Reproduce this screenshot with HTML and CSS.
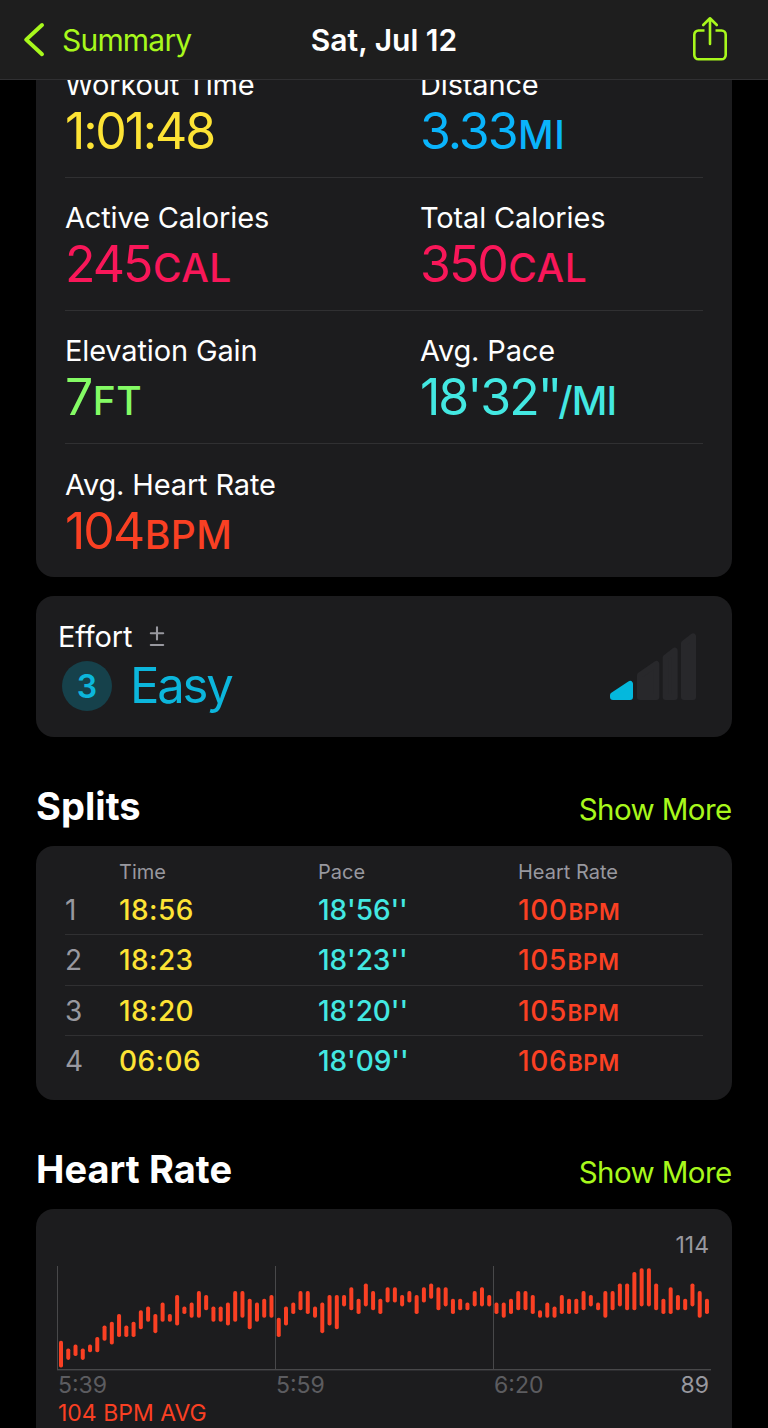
FILE: index.html
```html
<!DOCTYPE html>
<html lang="en">
<head>
    <meta charset="UTF-8">
    <meta name="viewport" content="width=device-width, initial-scale=1.0">
    <title>Workout Summary</title>
    <link rel="stylesheet" href="styles.css">
</head>
<body>
    <header class="navbar">
        <a class="back">
            <svg class="chevron" width="24" height="36" viewBox="0 0 24 36" fill="none" stroke="currentColor" stroke-width="4" stroke-linecap="round" stroke-linejoin="round">
                <path d="M20 3 4.2 17.6 20 32.2"/>
            </svg>
            <span>Summary</span>
        </a>
        <h1 class="title">Sat, Jul 12</h1>
        <svg class="share" width="36" height="46" viewBox="0 0 36 46" fill="none" stroke="currentColor" stroke-width="2.6" stroke-linecap="round" stroke-linejoin="round">
            <path d="M12.5 14.5H6.5a4.2 4.2 0 0 0-4.2 4.2v20.4a4.2 4.2 0 0 0 4.2 4.2h23a4.2 4.2 0 0 0 4.2-4.2V18.7a4.2 4.2 0 0 0-4.2-4.2h-6" stroke-linecap="butt"/>
            <path d="M18 28V2.6M11.2 9 18 2.3 24.8 9"/>
        </svg>
    </header>

    <main class="content">
        <section class="card stats">
            <div class="stat-row">
                <div class="stat"><div class="label">Workout Time</div><div class="value time clock">1:01:48</div></div>
                <div class="stat"><div class="label">Distance</div><div class="value distance">3.33<span class="unit">MI</span></div></div>
            </div>
            <div class="stat-row">
                <div class="stat"><div class="label">Active Calories</div><div class="value calories">245<span class="unit">CAL</span></div></div>
                <div class="stat"><div class="label">Total Calories</div><div class="value calories">350<span class="unit">CAL</span></div></div>
            </div>
            <div class="stat-row">
                <div class="stat"><div class="label">Elevation Gain</div><div class="value elevation">7<span class="unit">FT</span></div></div>
                <div class="stat"><div class="label">Avg. Pace</div><div class="value pace">18'32<span class="seconds">''</span><span class="unit">/MI</span></div></div>
            </div>
            <div class="stat-row">
                <div class="stat"><div class="label">Avg. Heart Rate</div><div class="value heart">104<span class="unit">BPM</span></div></div>
            </div>
        </section>

        <section class="card effort">
            <div>
                <div class="label effort-label">
                    <span>Effort</span>
                    <svg width="16" height="22" viewBox="0 0 16 22" fill="none" stroke="currentColor" stroke-width="2.1" stroke-linecap="round">
                        <path d="M1.8 7.3h12.4M8 1.2v12.2M1.8 19h12.4"/>
                    </svg>
                </div>
                <div class="effort-value">
                    <span class="badge">3</span>
                    <span class="value easy">Easy</span>
                </div>
            </div>
            <svg class="levels" width="86" height="67" viewBox="0 0 258 201" stroke-width="18" stroke-linejoin="round">
                <path class="level on" d="M9 192V187L60 153V192Z"/>
                <path class="level" d="M90 192V127L139 93V192Z"/>
                <path class="level" d="M167 192V74L194 53V192Z"/>
                <path class="level" d="M222 192V31L249 10V192Z"/>
            </svg>
        </section>

        <div class="section-head">
            <h2>Splits</h2>
            <a>Show More</a>
        </div>
        <section class="card splits">
            <div class="split split-head"><span></span><span>Time</span><span>Pace</span><span>Heart Rate</span></div>
            <div class="split"><span class="num">1</span><span class="time">18:56</span><span class="pace">18'56''</span><span class="heart">100<span class="unit">BPM</span></span></div>
            <div class="split"><span class="num">2</span><span class="time">18:23</span><span class="pace">18'23''</span><span class="heart">105<span class="unit">BPM</span></span></div>
            <div class="split"><span class="num">3</span><span class="time">18:20</span><span class="pace">18'20''</span><span class="heart">105<span class="unit">BPM</span></span></div>
            <div class="split"><span class="num">4</span><span class="time">06:06</span><span class="pace">18'09''</span><span class="heart">106<span class="unit">BPM</span></span></div>
        </section>

        <div class="section-head">
            <h2>Heart Rate</h2>
            <a>Show More</a>
        </div>
        <section class="card heart-card">
            <div class="chart-max">114</div>
            <svg class="chart" id="heartChart" width="654" height="105" viewBox="0 0 654 105"></svg>
            <div class="axis"><span>5:39</span><span>5:59</span><span>6:20</span><span class="chart-min">89</span></div>
            <div class="average heart">104 BPM AVG</div>
        </section>
    </main>
    <script>
        // [high, low] bpm for each interval
        const samples = [
            [95,89],[93,91],[94,92],[93,91],[94,93],[96,93],[99,96],[100,95],[102,97],[99,97],
            [100,97],[103,99],[104,101],[102,98],[105,101],[102,101],[107,100],[104,103],[105,102],[108,102],
            [107,104],[104,101],[104,101],[105,100],[108,101],[108,102],[106,99],[105,101],[106,102],[107,102],
            [101,97],[104,100],[105,103],[108,104],[108,103],[104,102],[105,98],[107,100],[107,99],[107,105],
            [109,104],[106,103],[110,105],[108,104],[106,103],[109,106],[109,106],[107,105],[108,106],[107,103],
            [109,106],[110,107],[109,104],[109,105],[106,103],[106,104],[105,104],[108,105],[109,105],[107,105],
            [105,103],[105,102],[106,103],[108,104],[108,104],[107,103],[103,102],[105,102],[104,102],[107,103],
            [106,103],[106,103],[108,104],[107,105],[105,104],[108,102],[108,104],[110,105],[110,104],[113,104],
            [114,105],[114,105],[110,104],[106,103],[109,103],[107,104],[106,104],[110,105],[108,102],[106,103]
        ];
        const maxBpm = 114;
        const unit = 3.82;  // pixels per bpm
        const step = 7.258;

        function add(name, attrs) {
            const el = document.createElementNS("http://www.w3.org/2000/svg", name);
            for (const key in attrs) {
                el.setAttribute(key, attrs[key]);
            }
            document.getElementById("heartChart").appendChild(el);
        }

        function drawChart() {
            for (const x of [0, 218, 436]) {
                add("rect", { class: "grid", x: x, y: 0, width: 1, height: 104 });
            }
            add("rect", { class: "grid", x: 0, y: 103, width: 654, height: 1.4 });

            samples.forEach(([high, low], i) => {
                add("rect", {
                    class: "beat",
                    x: 2 + i * step,
                    y: 2.2 + (maxBpm - high) * unit,
                    width: 4,
                    height: (high - low + 1) * unit,
                    rx: 1.8
                });
            });
        }

        drawChart();
    </script>
</body>
</html>
```
FILE: styles.css
```css
body, html {
    height: 100%;
    margin: 0;
    background: #000;
    overflow: hidden;
}

body {
    color: #fff;
    font-family: Inter, "Liberation Sans", sans-serif;
    font-size: 29px;
}

h1, h2 {
    margin: 0;
}

.navbar {
    position: relative;
    z-index: 1;
    box-sizing: border-box;
    display: grid;
    grid-template-columns: 1fr auto 1fr;
    align-items: center;
    height: 80px;
    padding: 0 40px;
    background: #1e1e1e;
    border-bottom: 1px solid #303032;
    color: #a8f81c;
}

.back {
    display: flex;
    align-items: center;
    gap: 16px;
    margin-left: -18px;
    font-size: 30px;
    letter-spacing: -0.8px;
}

.title {
    color: #fff;
    font-size: 30px;
    font-weight: 600;
    letter-spacing: 0;
}

.share {
    justify-self: end;
    margin-bottom: 1px;
}

.content {
    padding: 0 36px;
}

.card {
    box-sizing: border-box;
    background: #1c1c1e;
    border-radius: 18px;
}

.stats {
    margin-top: -56px;
    padding: 20.5px 29px 0;
    height: 553.4px;
}

.stat-row {
    box-sizing: border-box;
    display: grid;
    grid-template-columns: 355px 1fr;
    height: 133.33px;
    padding-top: 22.2px;
    border-bottom: 1px solid #303032;
}

.stat-row:last-child {
    border-bottom: none;
}

.label {
    line-height: 36px;
    letter-spacing: -0.15px;
}

.value {
    font-size: 50px;
    line-height: 56px;
    letter-spacing: -2px;
}

.clock {
    letter-spacing: -2.2px;
}

.unit {
    margin-left: 1.5px;
    font-size: 39px;
    font-weight: 500;
    line-height: 1;
    letter-spacing: 0.5px;
}

.seconds {
    letter-spacing: -5.5px;
}

.seconds + .unit {
    margin-left: 1.5px;
    font-weight: 450;
    letter-spacing: -0.8px;
}

.time { color: #fde335; }
.distance { color: #0ab4fb; }
.calories { color: #f81759; }
.elevation { color: #84fb65; }
.pace { color: #43e8e2; }
.heart { color: #fa4023; }

.effort {
    display: flex;
    justify-content: space-between;
    align-items: center;
    height: 141px;
    margin-top: 18.6px;
    padding: 0 36px 0 22px;
}

.effort-label {
    display: flex;
    align-items: center;
    gap: 17px;
    margin-top: 2px;
}

.effort-label svg {
    color: #98989f;
}

.effort-value {
    display: flex;
    align-items: center;
    gap: 18px;
    margin: 2px 0 0 4px;
}

.badge {
    width: 50px;
    height: 50px;
    border-radius: 50%;
    background: #16414b;
    color: #0cb6dc;
    font-size: 32px;
    font-weight: 600;
    line-height: 51px;
    text-align: center;
}

.easy {
    color: #0cb6dc;
    font-size: 49px;
    line-height: 58px;
    letter-spacing: -2.2px;
}

.level {
    fill: #28282b;
    stroke: #28282b;
}

.level.on {
    fill: #04b8dd;
    stroke: #04b8dd;
}

.section-head {
    display: flex;
    justify-content: space-between;
    align-items: baseline;
    height: 46px;
    margin: 46px 0 17px;
    line-height: 46px;
}

.section-head h2 {
    font-size: 38px;
    font-weight: 700;
    letter-spacing: 0.05px;
}

.section-head a {
    margin-right: 0.5px;
    color: #a8f81c;
    font-size: 29.5px;
    letter-spacing: -0.6px;
}

.splits {
    height: 254px;
    padding: 14px 29px 0;
}

.split {
    box-sizing: border-box;
    display: grid;
    grid-template-columns: 54px 199px 200px 1fr;
    height: 50.2px;
    border-bottom: 1px solid #303032;
    font-size: 28px;
    line-height: 51px;
}

.split:last-child {
    border-bottom: none;
}

.split-head {
    height: 25.3px;
    border-bottom: none;
    color: #98989f;
    font-size: 20px;
    line-height: 24px;
    letter-spacing: 0;
}

.split .time {
    font-weight: 450;
    letter-spacing: 0.4px;
}

.split .pace {
    font-weight: 450;
    letter-spacing: -0.1px;
}

.split .heart {
    font-weight: 450;
    letter-spacing: 0.7px;
}

.split .unit {
    margin-left: 0.5px;
    font-size: 22.5px;
    font-weight: 600;
    letter-spacing: 0.6px;
}

.num {
    color: #98989f;
}

.heart-card {
    height: 260px;
    padding: 21.6px 21px 0;
    font-size: 23px;
    line-height: 28px;
}

.chart-max {
    padding-right: 2px;
    color: #98989f;
    text-align: right;
}

.chart {
    display: block;
    margin-top: 7.4px;
}

.grid {
    fill: #48484a;
}

.beat {
    fill: #fa4023;
}

.axis {
    display: grid;
    grid-template-columns: 218px 218px 1fr auto;
    padding: 0 2px 0 1px;
    color: #5c5c60;
}

.chart-min {
    color: #98989f;
}

.average {
    padding-left: 1px;
}
```
